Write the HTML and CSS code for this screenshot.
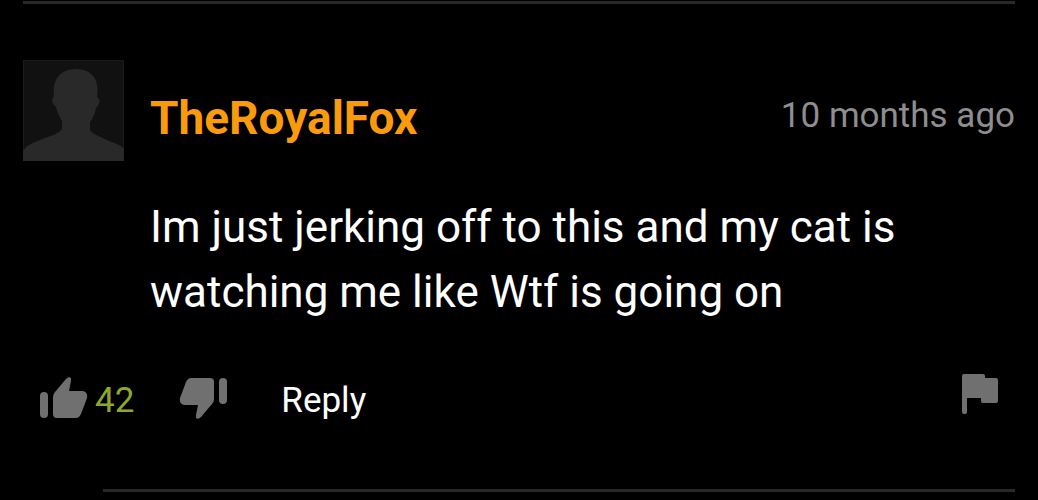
FILE: index.html
```html
<!DOCTYPE html>
<html lang="en">
<head>
  <meta charset="UTF-8">
  <meta name="viewport" content="width=device-width, initial-scale=1.0">
  <title>Comments</title>
  <link rel="stylesheet" href="styles.css">
</head>
<body>
  <div class="comments">
    <article class="comment">
      <header class="comment-header">
        <svg class="avatar" viewBox="0 0 101 101" aria-hidden="true">
          <rect class="avatar-bg" x="1" y="1" width="99" height="99"/>
          <path class="avatar-person" d="M0 91C3 86 9 83 17 80C27 76 36 74 39 69V61C36 56 34 51 33 47C29 44 28 39 31 36C29 20 37 9 53 9C69 9 77 20 74 37C78 39 77 44 73 48C72 54 70 58 67 62V70C69 74 78 77 86 81C94 84 99 86 101 89V101H0Z"/>
        </svg>
        <a class="username" href="#">TheRoyalFox</a>
        <time class="date">10 months ago</time>
      </header>

      <p class="comment-text">Im just jerking off to this and my cat is watching me like Wtf is going on</p>

      <footer class="actions">
        <button type="button" class="vote" aria-label="Like">
          <svg class="thumb" viewBox="0 0 48 42">
            <rect x="0" y="15" width="8" height="26" rx="4"/>
            <path d="M13 20Q13 17 15 15L26 2Q29 -1 31 1Q31 2 31 4L29 14H43Q48 15 47 21L41 37Q39 41 36 41H17Q13 41 13 37Z"/>
          </svg>
        </button>
        <span class="votes">42</span>
        <button type="button" class="vote down" aria-label="Dislike">
          <svg class="thumb" viewBox="0 0 48 42">
            <rect x="0" y="15" width="8" height="26" rx="4"/>
            <path d="M13 20Q13 17 15 15L26 2Q29 -1 31 1Q31 2 31 4L29 14H43Q48 15 47 21L41 37Q39 41 36 41H17Q13 41 13 37Z"/>
          </svg>
        </button>
        <button type="button" class="reply">Reply</button>
        <button type="button" class="flag" aria-label="Report">
          <svg class="flag-icon" viewBox="0 0 38 42">
            <path d="M3 1H22Q24 1 24 3V5H35Q37 5 37 7V28Q37 30 35 30H22Q20 30 20 28V25H6V39Q6 41 4 41H3Q1 41 1 39V3Q1 1 3 1Z"/>
          </svg>
        </button>
      </footer>
    </article>
    <hr class="reply-line">
  </div>
</body>
</html>
```
FILE: styles.css
```css
* {
  margin: 0;
  padding: 0;
  box-sizing: border-box;
}
body {
  font-family: Roboto, sans-serif;
  background-color: #000;
  color: #fff;
}
.comments {
  padding: 1px 23px 0;
}
.comment {
  border-top: 3px solid #292929;
  padding-top: 56px;
}
.comment-header {
  display: flex;
  align-items: center;
}
.avatar {
  width: 101px;
  height: 101px;
  margin-right: 26px;
  background-color: #1b1b1b;
}
.avatar-bg {
  fill: #111;
}
.avatar-person {
  fill: #292929;
}
.username {
  color: #f99b0c;
  font-size: 46px;
  font-weight: bold;
  line-height: 52px;
  padding-top: 14px;
  text-decoration: none;
}
.date {
  margin-left: auto;
  color: #8e8e8e;
  font-size: 35px;
  padding-top: 10px;
}
.comment-text {
  margin: 34px 100px 0 127px;
  font-size: 44px;
  line-height: 65px;
}
.actions {
  display: flex;
  align-items: center;
  margin-top: 43px;
  padding: 0 16px 0 17px;
  font-size: 35px;
  line-height: 54px;
}
button {
  border: none;
  background: none;
  color: inherit;
  font: inherit;
  cursor: pointer;
}
svg {
  display: block;
}
.actions svg {
  fill: #707070;
}
.thumb {
  width: 48px;
  height: 42px;
}
.votes,
.reply {
  padding-top: 6px;
}
.votes {
  color: #8fa82b;
  margin: 0 45px 0 7px;
}
.down .thumb {
  transform: rotate(180deg);
}
.reply {
  margin-left: 54px;
}
.flag {
  margin-left: auto;
  padding-bottom: 8px;
}
.flag-icon {
  width: 38px;
  height: 42px;
}
.reply-line {
  margin: 61px 0 0 80px;
  border: none;
  border-top: 3px solid #292929;
}
```
